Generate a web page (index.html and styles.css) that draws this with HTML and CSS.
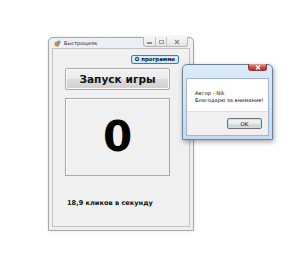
FILE: index.html
```html
<!DOCTYPE html>
<html lang="ru">
<head>
<meta charset="utf-8">
<link rel="stylesheet" href="styles.css">
</head>
<body>
<div class="desk">
  <div class="win main">
    <div class="titlebar">
      <span class="appicon"><svg width="7" height="7" viewBox="0 0 7 7"><circle cx="3" cy="4" r="2.5" fill="#c98a3c"/><circle cx="5" cy="2" r="1.6" fill="#6b8fd0"/></svg></span>
      <span class="title">Быстрощелк</span>
      <div class="caption-btns">
        <span class="cb min"><i class="g-min"></i></span>
        <span class="cb max"><i class="g-max"></i></span>
        <span class="cb close"><svg width="6" height="6" viewBox="0 0 6 6"><path d="M1 1L5 5M5 1L1 5" stroke="#8a8a8a" stroke-width="1.2"/></svg></span>
      </div>
    </div>
    <div class="client">
      <div class="toprow"><button class="about">О программе</button></div>
      <button class="start">Запуск игры</button>
      <div class="panel"><span class="count">0</span></div>
      <div class="rate">18,9 кликов в секунду</div>
    </div>
  </div>

  <div class="win dialog">
    <div class="dtitle">
      <span class="dclose"><svg width="6" height="5" viewBox="0 0 6 5"><path d="M1 0.5L5 4.5M5 0.5L1 4.5" stroke="#fff" stroke-width="1.3"/></svg></span>
    </div>
    <div class="dclient">
      <div class="msg">
        <div>Автор - Nik</div>
        <div>Благодарю за внимание!</div>
      </div>
      <div class="dfoot"><button class="ok">OK</button></div>
    </div>
  </div>
</div>
</body>
</html>
```
FILE: styles.css
```css
* { box-sizing: border-box; }
html, body { margin: 0; padding: 0; background: #fff; }
.desk { position: relative; width: 300px; height: 255px; overflow: hidden; font-family: "DejaVu Sans", Verdana, sans-serif; }

.win { position: absolute; }

.main {
  left: 48px; top: 37px; width: 146px; height: 194px;
  background: #eceff3;
  border: 1px solid #a7a7a7;
  border-radius: 5px 5px 0 0;
  padding: 0 3px 3px 3px;
  display: flex; flex-direction: column;
  box-shadow: 0 0 3px rgba(0,0,0,0.12);
}
.titlebar { height: 10px; display: flex; align-items: center; position: relative; }
.appicon { width: 7px; height: 7px; margin-left: 2px; display: flex; }
.title { font-size: 5px; color: #222; margin-left: 3px; line-height: 1; }
.caption-btns {
  position: absolute; right: 2px; top: -1px;
  display: flex; height: 10px;
  border: 1px solid #b5b5b5; border-top: none;
  border-radius: 0 0 3px 3px;
  background: linear-gradient(#f7f7f7, #e4e4e4);
}
.cb { display: flex; align-items: center; justify-content: center; height: 100%; }
.cb.min { width: 12px; border-right: 1px solid #c4c4c4; }
.cb.max { width: 11px; border-right: 1px solid #c4c4c4; }
.cb.close { width: 20px; }
.g-min { width: 5px; height: 2px; background: #8f8f8f; margin-top: 2px; }
.g-max { width: 5px; height: 4px; border: 1px solid #9a9a9a; }

.client {
  flex: 1;
  background: #f0f0f0;
  border: 1px solid #c3c3c3;
  display: flex; flex-direction: column;
  padding: 0 18px 0 12px;
}
.toprow { display: flex; justify-content: flex-end; margin-top: 6px; margin-right: -8px; }
.about {
  font-family: "DejaVu Sans", sans-serif; font-weight: bold; font-size: 5.4px;
  width: 48px; height: 9px; padding: 0; line-height: 7px;
  border: 1px solid #3c7fb1; border-radius: 2px;
  background: linear-gradient(#eaf6fd, #bee6fd);
  color: #111;
  box-shadow: inset 0 0 0 1px #cbe8f8;
}
.start {
  margin-top: 4px;
  width: 105px; height: 22px; padding: 0;
  font-family: "DejaVu Sans", sans-serif; font-weight: bold; font-size: 10.6px;
  color: #111;
  border: 1px solid #acacac; border-radius: 2px;
  background: linear-gradient(#f2f2f2 0%, #ebebeb 50%, #dddddd 51%, #cfcfcf 100%);
  box-shadow: inset 0 0 0 1px #f8f8f8;
}
.panel {
  margin-top: 8px;
  width: 105px; height: 78px;
  border: 1px solid #a8a8a8;
  box-shadow: inset 1px 1px 0 #fff;
  display: flex; align-items: center; justify-content: center;
}
.count { font-family: "DejaVu Sans", sans-serif; font-weight: bold; font-size: 42px; line-height: 1; color: #000; }
.rate { margin-top: 24px; margin-left: 2px; font-size: 6.6px; font-weight: bold; color: #111; line-height: 1; white-space: nowrap; }

.dialog {
  left: 182px; top: 64px; width: 91px; height: 76px;
  border: 1px solid #6b7f95;
  border-radius: 5px 5px 0 0;
  background: linear-gradient(#dcebfa, #c4dbf3);
  padding: 0 3px 3px 3px;
  display: flex; flex-direction: column;
  box-shadow: 1px 2px 5px rgba(0,0,0,0.35);
}
.dtitle { height: 13px; display: flex; justify-content: flex-end; align-items: flex-start; }
.dclose {
  width: 19px; height: 7px; margin-top: -1px; margin-right: 2px;
  border: 1px solid #8a3a30; border-top: none; border-radius: 0 0 3px 3px;
  background: linear-gradient(#e8a393, #c75050 50%, #b3322a);
  display: flex; align-items: center; justify-content: center;
}
.dclient { flex: 1; background: #fff; border: 1px solid #a4b6c9; display: flex; flex-direction: column; }
.msg { flex: 1; padding: 11px 0 0 8px; font-family: "DejaVu Sans", sans-serif; font-size: 5.2px; color: #111; line-height: 7px; }
.dfoot { height: 24px; background: #f0f0f0; border-top: 1px solid #dfdfdf; display: flex; justify-content: flex-end; align-items: center; padding-right: 6px; }
.ok {
  width: 35px; height: 11px; padding: 0;
  font-family: "DejaVu Sans", sans-serif; font-size: 5.5px; color: #111;
  border: 1px solid #707070; border-radius: 2px;
  background: linear-gradient(#f2f2f2, #ebebeb 50%, #dddddd 51%, #cfcfcf);
  box-shadow: inset 0 0 0 1px #bde6fd;
}
```
